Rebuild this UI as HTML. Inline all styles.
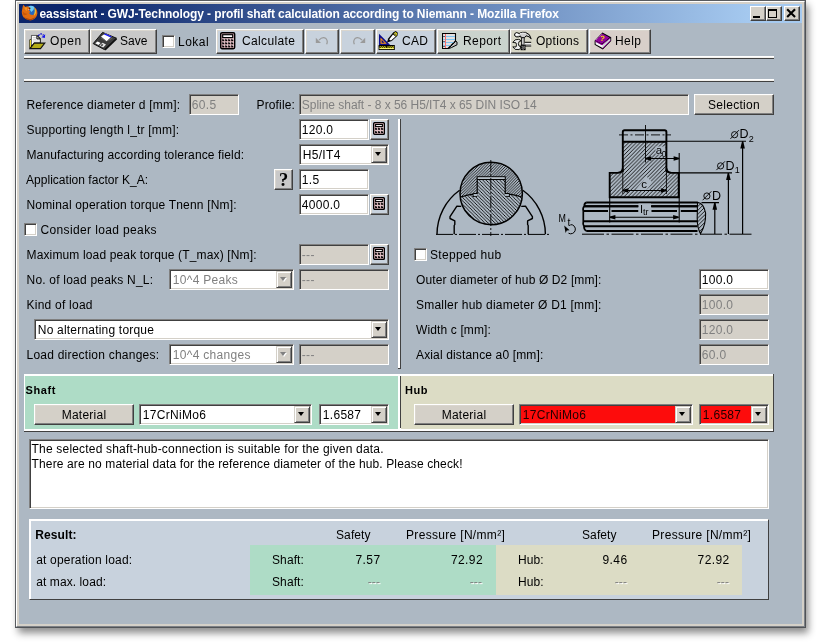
<!DOCTYPE html>
<html><head><meta charset="utf-8"><title>eassistant</title>
<style>
html,body{margin:0;padding:0;background:#fff;}
body{width:821px;height:643px;overflow:hidden;position:relative;will-change:transform;font-family:"Liberation Sans",sans-serif;font-size:12px;color:#000;}
div,span{box-sizing:border-box;}
.abs,.t,.btn,.inp,.sel,.cb,.tb{position:absolute;}
.t{white-space:nowrap;line-height:14px;height:14px;letter-spacing:0.1px;}
.g{color:#808080;}
.win{position:absolute;left:15px;top:0;width:791px;height:628px;background:#d4d0c8;box-shadow:2.5px 5px 7.5px 0 rgba(0,0,0,0.46);}
.content{position:absolute;left:19px;top:23px;width:783px;height:601px;background:#adb8c3;}
.title{position:absolute;left:19px;top:4px;width:783px;height:19px;background:linear-gradient(to right,#0a246a 0%,#0a246a 6%,#a6caf0 94%,#a6caf0 100%);}
.title .tt{position:absolute;left:20.5px;top:3.4px;color:#fff;font-weight:bold;font-size:12px;line-height:15px;white-space:nowrap;letter-spacing:-0.105px;}
.wb{position:absolute;top:2px;width:16px;height:15px;background:#d4d0c8;border:1px solid;border-color:#fff #404040 #404040 #fff;box-shadow:inset -1px -1px 0 #808080;}
.btn{background:#d4d0c8;border:1px solid;border-color:#fff #404040 #404040 #fff;box-shadow:inset -1px -1px 0 #808080,inset 1px 1px 0 #dad6ce;text-align:center;white-space:nowrap;}
.tb{top:29px;height:25px;}
.tb .x{position:absolute;top:4px;line-height:14px;font-size:12px;letter-spacing:0.15px;}
.inp{height:21px;background:#fff;border:1px solid;border-color:#808080 #fff #fff #808080;box-shadow:inset 1px 1px 0 #404040,inset -1px -1px 0 #d4d0c8;padding:3px 0 0 1.8px;line-height:14px;white-space:nowrap;overflow:hidden;letter-spacing:0.3px;}
.dis{background:#d4d0c8;color:#808080;}
.inp.s{padding-left:2.8px;}
.arr{position:absolute;right:1px;top:1px;width:16px;height:17px;background:#d4d0c8;border:1px solid;border-color:#d4d0c8 #404040 #404040 #d4d0c8;box-shadow:inset 1px 1px 0 #fff,inset -1px -1px 0 #808080;}
.arr i{position:absolute;left:2.6px;top:4.8px;width:0;height:0;border-left:3.9px solid transparent;border-right:3.9px solid transparent;border-top:4.3px solid #000;}
.arr.d i{border-top-color:#808080;}
.arr.d i{filter:drop-shadow(1px 1px 0 #fff);}
.cb{width:13px;height:13px;background:#fff;border:1px solid;border-color:#808080 #fff #fff #808080;box-shadow:inset 1px 1px 0 #404040,inset -1px -1px 0 #d4d0c8;}
.hr{position:absolute;left:24px;width:750px;height:3px;background:#f4f2ee;border-top:1px solid #fff;border-bottom:1px solid #404040;}
</style></head><body>

<div class="win">
<div class="abs" style="left:0;top:0;width:791px;height:628px;border:1px solid;border-color:#585b5f #505357 #505357 #585b5f;"></div>
<div class="abs" style="left:1px;top:1px;width:789px;height:626px;border:1px solid;border-color:#fff #7c8086 #7c8086 #fff;"></div>
</div>
<div class="title">
<svg class="abs" style="left:1.6px;top:0.4px" width="17" height="17" viewBox="0 0 16 16.4">
<circle cx="9" cy="7.6" r="5.8" fill="#2468c0"/>
<path d="M7 2.2 Q10 0.8 12.8 3 Q12.4 6 9.8 7.6 Q7.4 5.6 7 2.2Z" fill="#6cccf6"/>
<path d="M2 0.8 L4.2 2.8 Q5.4 1.9 6.6 2.3 L8.1 3.3 L8.9 5 L7.3 6 L8.9 7.7 L7.5 8.7 Q8.7 10.9 11.1 10.7 Q13.5 9.7 13.7 6.4 Q13.5 4.4 12.5 2.8 Q15.8 5 15.6 9.2 Q14.9 13.8 10.5 15.4 Q5.3 16.4 2.2 12.8 Q-0.1 9.5 0.9 5.4 Q1.2 3 2 0.8 Z" fill="#e06c10"/>
<path d="M12.7 3.2 Q14.7 5.6 14.1 8.8 Q13.5 10.6 12.4 11.3 Q13.8 7 12.7 3.2Z" fill="#f6d030"/>
<path d="M2.2 11.8 Q5.4 15.4 10.2 14.3 Q12.6 13.5 13.9 11.6 Q12.8 14.8 9.5 15.6 Q4.9 16.2 2.2 11.8Z" fill="#a84408"/>
<path d="M2.8 3.4 Q4.6 2.8 6 3.7 Q5 5.4 5.6 6.9 Q3.9 6.4 2.8 3.4Z" fill="#f4941c"/>
<path d="M1.4 7 Q3 9.6 6.4 9.4 Q4.4 11.4 2.2 10.6 Q1.2 9 1.4 7Z" fill="#c85808"/>
<circle cx="8.2" cy="4.1" r="0.75" fill="#4a1404"/>
<circle cx="6.9" cy="5.4" r="0.6" fill="#f8a0a0"/>
</svg>
<div class="tt">eassistant - GWJ-Technology - profil shaft calculation according to Niemann - Mozilla Firefox</div>
<div class="wb" style="left:731px"><div class="abs" style="left:2px;top:9px;width:7px;height:2px;background:#000"></div></div>
<div class="wb" style="left:747px"><div class="abs" style="left:1px;top:2px;width:9px;height:9px;border:1px solid #000;border-top-width:2px"></div></div>
<div class="wb" style="left:765px"><svg class="abs" style="left:1px;top:1px" width="12" height="11" viewBox="0 0 12 11"><path d="M1.9 1.9 L8.3 8.3 M8.3 1.9 L1.9 8.3" stroke="#000" stroke-width="2.1" stroke-linecap="square"/></svg></div>
</div>
<div class="content"></div>
<div class="btn tb" style="left:24px;width:66px;background:#c9c9c9">
<span class="x" style="left:25px;letter-spacing:0.6px">Open</span>
</div>
<div class="btn tb" style="left:90px;width:67px;background:#c9c9c9">
<span class="x" style="left:29px;letter-spacing:0.05px">Save</span>
</div>
<div class="btn tb" style="left:216px;width:88px;background:#c8d2dd">
<span class="x" style="left:25px;letter-spacing:0.35px">Calculate</span>
</div>
<div class="btn tb" style="left:305px;width:34px;background:#c8d2dd">
</div>
<div class="btn tb" style="left:340px;width:35px;background:#c8d2dd">
</div>
<div class="btn tb" style="left:376px;width:60px;background:#c8d2dd">
<span class="x" style="left:25px;letter-spacing:0.3px">CAD</span>
</div>
<div class="btn tb" style="left:437px;width:73px;background:#cad3cd">
<span class="x" style="left:25px;letter-spacing:0.4px">Report</span>
</div>
<div class="btn tb" style="left:510px;width:78px;background:#d7d6c6">
<span class="x" style="left:25px;letter-spacing:0.28px">Options</span>
</div>
<div class="btn tb" style="left:589px;width:62px;background:#d8cfc9">
<span class="x" style="left:25px;letter-spacing:0.4px">Help</span>
</div>
<svg class="abs" style="left:29px;top:33px" width="17" height="17" viewBox="0 0 17 17">
<path d="M9.2 2.9 Q11.6 -0.6 14.4 2.2" fill="none" stroke="#0808d0" stroke-width="1.3" stroke-dasharray="1.8 0.9"/>
<path d="M16.2 1.2 L15.8 5 L12.4 4.2 Z" fill="#1010f0"/>
<path d="M0.3 6.8 L2 5.8 V2 H8.2 L11.8 5.6 V10 H5.2 L1.4 15 H0.3 Z" fill="#111"/>
<path d="M2.9 2.9 H7.6 V6.2 H10.8 V9.4 H5 L2.9 12.2 Z" fill="#fff"/>
<path d="M2.4 12 V2.4 H8" fill="none" stroke="#808080" stroke-width="0.9"/>
<path d="M8 2.6 L11 5.8 H8 Z" fill="#fff" stroke="#111" stroke-width="0.9"/>
<path d="M3.8 4.6 H7 M3.8 6.3 H7 M3.8 8 H9.8" stroke="#c4c4c4" stroke-width="0.8"/>
<path d="M0.8 7.2 L2 6.5 V13.6 L0.8 15 Z" fill="#e8dc30"/>
<path d="M0.9 15.6 L5.3 10.1 H15.8 L11.5 15.6 Z" fill="#b4ac18" stroke="#111" stroke-width="1.1"/>
</svg><svg class="abs" style="left:92px;top:31px" width="26" height="20" viewBox="0 0 26 20">
<path d="M10.6 1.4 L24.4 7.2 L12.4 18.6 L1.2 12.6 Z" fill="#3c3c3c" stroke="#111" stroke-width="1"/>
<path d="M9 5.6 L13.2 2.6 L19.6 5.6 L14.6 10.2 Z" fill="#fff"/>
<path d="M11.6 3.3 L13.4 2.4 L19.8 5.4 L18.6 6.6 Z" fill="#1818f0"/>
<path d="M3.2 12.2 L5.6 10.4 L8.6 12 L6.4 14 Z" fill="#fff"/>
<path d="M7.4 14.6 L10.6 11.8 L14 13.6 L11.2 16.6 Z" fill="#e8e8e8"/>
<path d="M8.6 14.2 L10 13 L11.4 13.8 L10 15.2 Z" fill="#3c3c3c"/>
<path d="M24.6 7.6 L13 18.8" stroke="#111" stroke-width="1.6"/>
<path d="M9 7 L13 9 M16 9.4 L20.4 7.2" stroke="#777" stroke-width="0.7"/>
</svg><svg class="abs" style="left:220px;top:32px" width="16" height="18" viewBox="0 0 16 18">
<rect x="0.7" y="0.7" width="14" height="16" rx="1.4" fill="#dcb2b8" stroke="#000" stroke-width="1.4"/>
<rect x="2.7" y="2.7" width="10" height="2.9" fill="#fff" stroke="#000" stroke-width="1.2"/>
<rect x="2.1999999999999997" y="7.2" width="2" height="2" fill="#000"/><rect x="3.5" y="6.6" width="1.1" height="1.1" fill="#fbf0f2"/><rect x="5.199999999999999" y="7.2" width="2" height="2" fill="#000"/><rect x="6.5" y="6.6" width="1.1" height="1.1" fill="#fbf0f2"/><rect x="8.200000000000001" y="7.2" width="2" height="2" fill="#000"/><rect x="9.5" y="6.6" width="1.1" height="1.1" fill="#fbf0f2"/><rect x="11.200000000000001" y="7.2" width="2" height="2" fill="#000"/><rect x="12.5" y="6.6" width="1.1" height="1.1" fill="#fbf0f2"/><rect x="2.1999999999999997" y="10.299999999999999" width="2" height="2" fill="#000"/><rect x="3.5" y="9.7" width="1.1" height="1.1" fill="#fbf0f2"/><rect x="5.199999999999999" y="10.299999999999999" width="2" height="2" fill="#000"/><rect x="6.5" y="9.7" width="1.1" height="1.1" fill="#fbf0f2"/><rect x="8.200000000000001" y="10.299999999999999" width="2" height="2" fill="#000"/><rect x="9.5" y="9.7" width="1.1" height="1.1" fill="#fbf0f2"/><rect x="11.200000000000001" y="10.299999999999999" width="2" height="2" fill="#000"/><rect x="12.5" y="9.7" width="1.1" height="1.1" fill="#fbf0f2"/><rect x="2.1999999999999997" y="13.399999999999999" width="2" height="2" fill="#000"/><rect x="3.5" y="12.799999999999999" width="1.1" height="1.1" fill="#fbf0f2"/><rect x="5.199999999999999" y="13.399999999999999" width="2" height="2" fill="#000"/><rect x="6.5" y="12.799999999999999" width="1.1" height="1.1" fill="#fbf0f2"/><rect x="8.200000000000001" y="13.399999999999999" width="2" height="2" fill="#000"/><rect x="9.5" y="12.799999999999999" width="1.1" height="1.1" fill="#fbf0f2"/><rect x="11.200000000000001" y="13.399999999999999" width="2" height="2" fill="#000"/><rect x="12.5" y="12.799999999999999" width="1.1" height="1.1" fill="#fbf0f2"/></svg><svg class="abs" style="left:315px;top:36px" width="14" height="9" viewBox="0 0 14 9"><path d="M0.8 1.8 V7 H6 Z" fill="#9a9a9a"/><path d="M4 4.2 Q7.5 0.2 11 2.6 Q13.2 5 11.6 8.2" fill="none" stroke="#9a9a9a" stroke-width="1.2"/></svg><svg class="abs" style="left:352px;top:36px" width="14" height="9" viewBox="0 0 14 9"><path d="M13.2 1.8 V7 H8 Z" fill="#9a9a9a"/><path d="M10 4.2 Q6.5 0.2 3 2.6 Q0.8 5 2.4 8.2" fill="none" stroke="#9a9a9a" stroke-width="1.2"/></svg><svg class="abs" style="left:378px;top:31px" width="20" height="20" viewBox="0 0 20 20">
<path d="M1 2.8 V14 H12.2 Z" fill="#0a0a8c"/>
<path d="M2.5 6.4 V12.7 H8.8 Z" fill="#ff9a10"/>
<path d="M3.6 8.8 V11.8 H6.6 Z" fill="#0a0a8c"/>
<path d="M9 11.4 L10.2 7.4 L15.4 1.2 L17.8 0 L19.8 1.8 L19.4 4.8 L13.8 10 Z" fill="#000"/>
<path d="M11.2 8.4 L15 3.6 L17.6 5.6 L13 9.4 Z" fill="#fff"/>
<path d="M15.6 2.6 L17.6 1 L19 2.2 L18.6 4.4 L17.8 5 Z" fill="#f4ec10"/>
<path d="M16.6 2.4 L18 3.6" stroke="#1818b0" stroke-width="0.9"/>
<rect x="0.6" y="14" width="16.2" height="5" fill="#000"/>
<rect x="1.5" y="15.3" width="14.4" height="2.8" fill="#f8f020"/>
<path d="M1.2 15.4 L2.30 16.9 L3.40 15.4 L4.50 16.9 L5.60 15.4 L6.70 16.9 L7.80 15.4 L8.90 16.9 L10.00 15.4 L11.10 16.9 L12.20 15.4 L13.30 16.9 L14.40 15.4 L15.50 16.9" fill="none" stroke="#000" stroke-width="0.7"/>
<path d="M1.6 17.6 H16" stroke="#fff" stroke-width="0.8" stroke-dasharray="1 1"/>
<path d="M8.6 14.6 V16.6" stroke="#000" stroke-width="1"/>
</svg><svg class="abs" style="left:442px;top:33px" width="17" height="17" viewBox="0 0 17 17">
<path d="M0.5 0.5 H13.5 V8 L6 15.5 H0.5 Z" fill="#e2e0e0" stroke="#000" stroke-width="1.1"/>
<path d="M1.2 3.5 H13 M1.2 6.5 H13 M1.2 9.5 H11.4 M1.2 12.5 H8.4" stroke="#7cc4f0" stroke-width="1"/>
<path d="M3.5 1 V15" stroke="#f87070" stroke-width="1"/>
<path d="M2 3 V4 M2 8 V9 M2 13 V14" stroke="#000" stroke-width="1"/>
<path d="M6.4 15.6 L13.8 8.2 L15 9 V11.8 L9.4 14.6 Z" fill="#c0c0c0" stroke="#000" stroke-width="1"/>
</svg><svg class="abs" style="left:512px;top:31px" width="20" height="20" viewBox="0 0 20 20">
<path d="M2.6 4.6 Q2 2.2 4.4 1.6 L7.2 2.4 Q10 0.8 13.6 1.4 Q18.2 2.8 19.2 7.8 Q17.4 5.2 14 4.8 L12.4 6.8 H9.2 L8.6 5 Q6.2 6.4 4.2 5.8 Z" fill="#cfcfcf" stroke="#000" stroke-width="1"/>
<path d="M3.4 3.2 Q4 2.2 5.2 2.6 L7.2 3.4 Q6.2 5 4.2 4.8 Z" fill="#fff"/>
<path d="M8 2.6 Q11 1.6 13.6 2.4" fill="none" stroke="#f4f4f4" stroke-width="0.9"/>
<path d="M9.6 6.8 H12.2 V14 H9.6 Z" fill="#fafafa" stroke="#000" stroke-width="0.9"/>
<path d="M11.2 7.2 V14" stroke="#8c8c8c" stroke-width="0.9"/>
<path d="M12.6 11.6 H19 V14.6 H12.6 Z" fill="#f0f0f0"/>
<path d="M12.6 13.6 H19" stroke="#9c9c9c" stroke-width="1"/>
<path d="M12.6 11.3 H19.2 M12.6 15 H19.2" stroke="#000" stroke-width="1"/>
<path d="M0.8 11.4 L3.2 8.8 L6.6 8.4 Q8.6 8.6 9 10 L7.2 10.4 Q5.6 12.6 7 15 L9 15.6 Q8.8 17.8 7 18.6 L3.2 18.4 L0.8 15.8 L4 16 Q5 13.6 4 11.8 Z" fill="#ececec" stroke="#000" stroke-width="0.9"/>
<path d="M8.6 13.8 H13.6 V19.2 H8.6 Z" fill="#000"/>
<path d="M9.6 14.8 h1 v1 h-1 z M11.6 14.8 h1 v1 h-1 z M10.6 15.8 h1 v1 h-1 z M12.6 15.8 h0.8 v1 h-0.8 z M9.6 16.8 h1 v1 h-1 z M11.6 16.8 h1 v1 h-1 z M10.6 17.8 h1 v1 h-1 z" fill="#bdbdbd"/>
</svg><svg class="abs" style="left:594px;top:32px" width="18" height="18" viewBox="0 0 18 18">
<path d="M0.6 8.8 L8.4 0.6 L17.2 5.2 V9 L8.8 17.4 L0.6 12.8 Z" fill="#000"/>
<path d="M1.6 9.4 L8 12.8 L16.2 6.2 V8.6 L8.6 16 L1.6 12.2 Z" fill="#f6f6f6"/>
<path d="M8.3 13 L16.2 6.6 V8.6 L8.6 16 Z" fill="#ccd6d0"/>
<path d="M1.2 8.6 L8.2 1.4 L15.6 5.4 L8 11.8 Z" fill="#92049a"/>
<path d="M1.8 8 L8 1.8" stroke="#dcb0e0" stroke-width="0.9" stroke-dasharray="1 1"/>
<path d="M1.2 9.2 L8 12.8 L16.2 6" fill="none" stroke="#92049a" stroke-width="1"/>
<path d="M8.6 16.4 L16.6 8.6" stroke="#92049a" stroke-width="1"/>
<text x="6.3" y="9" font-family="Liberation Sans,sans-serif" font-weight="bold" font-size="7.5" fill="#f8e808" transform="rotate(10 9 6)">?</text>
</svg>
<div class="cb" style="left:162px;top:35px"></div>
<div class="t" style="left:178px;top:35px;letter-spacing:0.5px">Lokal</div>
<div class="hr" style="top:56px"></div>
<div class="hr" style="top:79px"></div>
<div class="t" style="left:26.5px;top:98px;letter-spacing:0.191px;">Reference diameter d [mm]:</div>
<div class="inp dis" style="left:189px;top:94px;width:50px">60.5</div>
<div class="t" style="left:256.5px;top:98px;letter-spacing:0.150px;">Profile:</div>
<div class="inp dis" style="left:299px;top:94px;width:390px;letter-spacing:-0.03px">Spline shaft - 8 x 56 H5/IT4 x 65 DIN ISO 14</div>
<div class="btn" style="left:694px;top:94px;width:80px;height:21px;line-height:20px;letter-spacing:0.3px">Selection</div>
<div class="t" style="left:26.5px;top:123px;letter-spacing:0.189px;">Supporting length l_tr [mm]:</div>
<div class="inp" style="left:299px;top:119px;width:70px">120.0</div>
<div class="btn calc" style="left:370px;top:119px;width:19px;height:21px;background:#c8d2dd"></div>
<div class="t" style="left:26.5px;top:148px;letter-spacing:0.121px;">Manufacturing according tolerance field:</div>
<div class="inp s" style="left:299px;top:144px;width:90px">H5/IT4<div class="arr"><i></i></div></div>
<div class="t" style="left:26px;top:173px;letter-spacing:0.027px;">Application factor K_A:</div>
<div class="btn" style="left:274px;top:169px;width:19px;background:#c9c9c9;height:21px;font:bold 18.5px 'Liberation Serif',serif;line-height:21px">?</div>
<div class="inp" style="left:299px;top:169px;width:70px">1.5</div>
<div class="t" style="left:26.5px;top:198px;letter-spacing:0.175px;">Nominal operation torque Tnenn [Nm]:</div>
<div class="inp" style="left:299px;top:194px;width:70px">4000.0</div>
<div class="btn calc" style="left:370px;top:194px;width:19px;height:21px;background:#c8d2dd"></div>
<div class="cb" style="left:24px;top:223px"></div>
<div class="t" style="left:40.5px;top:223px;letter-spacing:0.367px;">Consider load peaks</div>
<div class="t" style="left:26.5px;top:248px;letter-spacing:0.142px;">Maximum load peak torque (T_max) [Nm]:</div>
<div class="inp dis" style="left:299px;top:244px;width:70px">---</div>
<div class="btn calc" style="left:370px;top:244px;width:19px;height:21px;background:#c8d2dd"></div>
<div class="t" style="left:26.5px;top:273px;letter-spacing:0.211px;">No. of load peaks N_L:</div>
<div class="inp dis s" style="left:169px;top:269px;width:125px;background:#fff">10^4 Peaks<div class="arr d"><i></i></div></div>
<div class="inp dis" style="left:299px;top:269px;width:90px">---</div>
<div class="t" style="left:26.5px;top:298px;letter-spacing:0.238px;">Kind of load</div>
<div class="inp s" style="left:34px;top:319px;width:355px;letter-spacing:0.2px">No alternating torque<div class="arr"><i></i></div></div>
<div class="t" style="left:26.5px;top:348px;letter-spacing:0.231px;">Load direction changes:</div>
<div class="inp dis s" style="left:169px;top:344px;width:125px;background:#fff">10^4 changes<div class="arr d"><i></i></div></div>
<div class="inp dis" style="left:299px;top:344px;width:90px">---</div>
<svg class="abs" style="left:373px;top:122px" width="12" height="13" viewBox="0 0 12 13">
<rect x="0.6" y="0.6" width="10.8" height="11.8" rx="1.3" fill="#dfb9be" stroke="#000" stroke-width="1.3"/>
<rect x="2.6" y="2.5" width="6.8" height="2.1" fill="#fff" stroke="#000" stroke-width="1.1"/>
<rect x="2.1" y="5.8" width="2" height="2" fill="#000"/><rect x="3.4000000000000004" y="5.300000000000001" width="1" height="1" fill="#fbf0f2"/><rect x="5.1" y="5.8" width="2" height="2" fill="#000"/><rect x="6.4" y="5.300000000000001" width="1" height="1" fill="#fbf0f2"/><rect x="8.1" y="5.8" width="2" height="2" fill="#000"/><rect x="9.399999999999999" y="5.300000000000001" width="1" height="1" fill="#fbf0f2"/><rect x="2.1" y="9.1" width="2" height="2" fill="#000"/><rect x="3.4000000000000004" y="8.6" width="1" height="1" fill="#fbf0f2"/><rect x="5.1" y="9.1" width="2" height="2" fill="#000"/><rect x="6.4" y="8.6" width="1" height="1" fill="#fbf0f2"/><rect x="8.1" y="9.1" width="2" height="2" fill="#000"/><rect x="9.399999999999999" y="8.6" width="1" height="1" fill="#fbf0f2"/></svg><svg class="abs" style="left:373px;top:197px" width="12" height="13" viewBox="0 0 12 13">
<rect x="0.6" y="0.6" width="10.8" height="11.8" rx="1.3" fill="#dfb9be" stroke="#000" stroke-width="1.3"/>
<rect x="2.6" y="2.5" width="6.8" height="2.1" fill="#fff" stroke="#000" stroke-width="1.1"/>
<rect x="2.1" y="5.8" width="2" height="2" fill="#000"/><rect x="3.4000000000000004" y="5.300000000000001" width="1" height="1" fill="#fbf0f2"/><rect x="5.1" y="5.8" width="2" height="2" fill="#000"/><rect x="6.4" y="5.300000000000001" width="1" height="1" fill="#fbf0f2"/><rect x="8.1" y="5.8" width="2" height="2" fill="#000"/><rect x="9.399999999999999" y="5.300000000000001" width="1" height="1" fill="#fbf0f2"/><rect x="2.1" y="9.1" width="2" height="2" fill="#000"/><rect x="3.4000000000000004" y="8.6" width="1" height="1" fill="#fbf0f2"/><rect x="5.1" y="9.1" width="2" height="2" fill="#000"/><rect x="6.4" y="8.6" width="1" height="1" fill="#fbf0f2"/><rect x="8.1" y="9.1" width="2" height="2" fill="#000"/><rect x="9.399999999999999" y="8.6" width="1" height="1" fill="#fbf0f2"/></svg><svg class="abs" style="left:373px;top:247px" width="12" height="13" viewBox="0 0 12 13">
<rect x="0.6" y="0.6" width="10.8" height="11.8" rx="1.3" fill="#dfb9be" stroke="#000" stroke-width="1.3"/>
<rect x="2.6" y="2.5" width="6.8" height="2.1" fill="#fff" stroke="#000" stroke-width="1.1"/>
<rect x="2.1" y="5.8" width="2" height="2" fill="#000"/><rect x="3.4000000000000004" y="5.300000000000001" width="1" height="1" fill="#fbf0f2"/><rect x="5.1" y="5.8" width="2" height="2" fill="#000"/><rect x="6.4" y="5.300000000000001" width="1" height="1" fill="#fbf0f2"/><rect x="8.1" y="5.8" width="2" height="2" fill="#000"/><rect x="9.399999999999999" y="5.300000000000001" width="1" height="1" fill="#fbf0f2"/><rect x="2.1" y="9.1" width="2" height="2" fill="#000"/><rect x="3.4000000000000004" y="8.6" width="1" height="1" fill="#fbf0f2"/><rect x="5.1" y="9.1" width="2" height="2" fill="#000"/><rect x="6.4" y="8.6" width="1" height="1" fill="#fbf0f2"/><rect x="8.1" y="9.1" width="2" height="2" fill="#000"/><rect x="9.399999999999999" y="8.6" width="1" height="1" fill="#fbf0f2"/></svg>
<div class="abs" style="left:398px;top:119px;width:3px;height:250px;background:#fff;border-right:1px solid #404040;border-bottom:1px solid #404040"></div>
<div class="cb" style="left:414px;top:248px"></div>
<div class="t" style="left:430px;top:248px;letter-spacing:0.304px;">Stepped hub</div>
<div class="t" style="left:416px;top:273px;letter-spacing:0.129px;">Outer diameter of hub &Oslash; D2 [mm]:</div>
<div class="inp" style="left:699px;top:269px;width:70px">100.0</div>
<div class="t" style="left:416px;top:298px;letter-spacing:0.222px;">Smaller hub diameter &Oslash; D1 [mm]:</div>
<div class="inp dis" style="left:699px;top:294px;width:70px">100.0</div>
<div class="t" style="left:416px;top:323px;letter-spacing:0.130px;">Width c [mm]:</div>
<div class="inp dis" style="left:699px;top:319px;width:70px">120.0</div>
<div class="t" style="left:416px;top:348px;letter-spacing:0.148px;">Axial distance a0 [mm]:</div>
<div class="inp dis" style="left:699px;top:344px;width:70px">60.0</div>
<svg class="abs" style="left:430px;top:118px" width="340" height="128" viewBox="430 118 340 128" shape-rendering="auto">
<defs>
<pattern id="h1" width="3.8" height="3.8" patternUnits="userSpaceOnUse"><path d="M-1 4.8 L4.8 -1 M-1 1 L1 -1 M2.8 4.8 L4.8 2.8" stroke="#000" stroke-width="0.85"/></pattern>
<pattern id="h2" width="2.8" height="2.8" patternUnits="userSpaceOnUse"><path d="M-1 3.8 L3.8 -1 M-1 1 L1 -1 M1.8 3.8 L3.8 1.8" stroke="#000" stroke-width="0.8"/></pattern>
<pattern id="h3" width="3.4" height="3.4" patternUnits="userSpaceOnUse"><path d="M-1 -1 L4.4 4.4 M-1 2.4 L1 4.4 M2.4 -1 L4.4 1" stroke="#000" stroke-width="0.85"/></pattern>
<clipPath id="cc"><circle cx="490.5" cy="193.5" r="31"/></clipPath>
</defs>
<clipPath id="cc2"><circle cx="491.2" cy="193.5" r="31.2"/></clipPath>
<g clip-path="url(#cc2)"><path d="M459.2 160 H523.2 V197 L521.4 197 Q514.7 194.5 509.2 194 L509.2 193.5 H505.2 V177 H477.2 V193.5 H473.2 L473.2 194 Q467.7 194.5 461.0 197 L459.2 197 Z" fill="url(#h2)"/><path d="M459.2 197 L461.0 197 Q467.7 194.5 473.2 194 L473.2 196.5 H477.2 V179 H505.2 V196.5 H509.2 V194 Q514.7 194.5 521.4 197 L523.2 197 V226 H459.2 Z" fill="url(#h3)"/></g>
<circle cx="491.2" cy="193.5" r="31.2" stroke="#000" fill="none" stroke-width="1.5"/>
<path d="M460.8 197 Q467.7 194.6 473.2 194.2 M473.2 193.5 H477.2 V176.8 H505.2 V193.5 H509.2 M509.2 194.2 Q514.7 194.6 521.6 197 M473.2 193.5 V196.5 H477.2 M509.2 193.5 V196.5 H505.2 M477.2 179.3 H505.2" stroke="#000" fill="none" stroke-width="1.2"/>
<rect x="473.7" y="194" width="3" height="2.2" fill="#adb8c3"/><rect x="505.7" y="194" width="3" height="2.2" fill="#adb8c3"/><rect x="477.7" y="177.4" width="27" height="1.4" fill="#c4ccd4"/>
<path d="M437.0 234.3 A54.2 54.2 0 0 1 459.6 190.3 M545.4 234.3 A54.2 54.2 0 0 0 522.8 190.3" stroke="#000" fill="none" stroke-width="1.4"/>
<path d="M521.2 206.4 L525.5 206.2 L532.4 216.6 L532.4 218.5 L527.6 220.9 L527.6 224.5 L528.2 225.5 L528.2 234.3 M461.2 206.4 L456.9 206.2 L450.0 216.6 L450.0 218.5 L454.8 220.9 L454.8 224.5 L454.2 225.5 L454.2 234.3" stroke="#000" fill="none" stroke-width="1.4" stroke-linejoin="round"/>
<path d="M490.8 160 V236" stroke="#000" fill="none" stroke-width="0.9" stroke-dasharray="12 2 2 2"/>
<path d="M436 234.4 H549" stroke="#000" fill="none" stroke-width="1" stroke-dasharray="17 2 2 2"/>
<text x="558.6" y="222.3" font-family="Liberation Sans,sans-serif" font-size="11.5" fill="#000" textLength="7.4" lengthAdjust="spacingAndGlyphs">M</text>
<text x="567.4" y="225.6" font-family="Liberation Sans,sans-serif" font-size="10.5" fill="#000">t</text>
<path d="M570.5 224.6 A4.6 4.6 0 1 1 568.5 233.2" stroke="#000" fill="none" stroke-width="1"/>
<path d="M564.2 225.6 L569.6 230.2 L566.8 230.6 L565.6 233 Z" fill="#000"/>
<path d="M622.8 141.7 H666.4 V168.5 Q667 172.8 671.5 172.9 H678.7 V197.3 H609.7 V172.9 H617.5 Q622.2 172.8 622.8 168.5 Z" fill="url(#h1)"/>
<path d="M655.5 146.5 H665.6 V157 H662 V154.5 H655.5 Z" fill="#adb8c3"/>
<path d="M635.5 190 L646.5 176.5 L652.5 182.5 L646.5 190 Z" fill="#adb8c3"/>
<path d="M622.8 172 V132 Q622.8 130.2 624.6 130.2 H664.6 Q666.4 130.2 666.4 132 V172 M622.8 141.7 H666.4" stroke="#000" fill="none" stroke-width="1.9"/>
<path d="M622.8 168.5 Q622.2 172.8 617.5 172.9 H609.7 V197.3 H678.7 V172.9 H671.5 Q667 172.8 666.4 168.5" stroke="#000" fill="none" stroke-width="1.9"/>
<path d="M622.8 172 V194 M666.4 172 V194" stroke="#000" fill="none" stroke-width="0.9"/>
<path d="M645.5 125 V162.5" stroke="#000" fill="none" stroke-width="0.9"/>
<path d="M619 134.9 H671" stroke="#000" fill="none" stroke-width="0.9" stroke-dasharray="9 2.5 2 2.5"/>
<path d="M666.4 141.3 H746 M679 172.9 H732 M701.5 202.6 H719 M679.2 153 V222.5 M609.7 197.3 V222.5" stroke="#000" fill="none" stroke-width="1.1"/>
<path d="M645.5 158.5 H679.2 M622.8 190.5 H666.4 M609.7 217.3 H678.7" stroke="#000" fill="none" stroke-width="1.1"/>
<path d="M645.8 157.8 L651.1999999999999 156.2 V160.8 L645.8 159.2 Z" fill="#000"/>
<path d="M679 157.8 L673.6 156.2 V160.8 L679 159.2 Z" fill="#000"/>
<path d="M623 189.8 L628.4 188.2 V192.8 L623 191.2 Z" fill="#000"/>
<path d="M666.2 189.8 L660.8000000000001 188.2 V192.8 L666.2 191.2 Z" fill="#000"/>
<path d="M610 216.60000000000002 L615.4 215.0 V219.60000000000002 L610 218.0 Z" fill="#000"/>
<path d="M678.5 216.60000000000002 L673.1 215.0 V219.60000000000002 L678.5 218.0 Z" fill="#000"/>
<text x="655.8" y="153.6" font-size="11.5" font-family="Liberation Sans,sans-serif" fill="#000">a</text><text x="661.7" y="156.5" font-size="9.5" font-family="Liberation Sans,sans-serif" fill="#000" textLength="4.6" lengthAdjust="spacingAndGlyphs">0</text>
<text x="641.3" y="188.2" font-size="11.5" font-family="Liberation Sans,sans-serif" fill="#000">c</text>
<path d="M586.3 202.4 H697.5 M584.5 206.2 H697.5 M583.3 211.1 H608 M611.5 211.1 H638.5 M651.5 211.1 H677 M680.8 211.1 H697.5 M583.3 221.3 H697.5 M584 226.2 H697.5 M586.3 231 H697.5" stroke="#000" fill="none" stroke-width="2"/>
<path d="M586.5 202.4 Q584 203.5 584.3 206.2 Q582.5 208 583.3 211.1 V221.3 Q582.6 224 584 226.2 Q583.8 229.5 586.5 231" stroke="#000" fill="none" stroke-width="1.7"/>
<rect x="638.5" y="203.5" width="12.5" height="12" fill="#adb8c3"/>
<path d="M584.5 206.2 H638 M651.5 206.2 H697" stroke="#000" fill="none" stroke-width="2"/>
<text x="640.2" y="212.6" font-size="11.5" font-family="Liberation Sans,sans-serif" fill="#000">l</text><text x="643" y="215.4" font-size="9" font-family="Liberation Sans,sans-serif" fill="#000">tr</text>
<path d="M697.5 202.4 Q703.5 203 705.6 213 Q706 225 700.5 233.6 Q697.2 228 697.2 218 Z" fill="url(#h1)" stroke="#000" stroke-width="1.1"/>
<path d="M582 234.2 H752" stroke="#000" fill="none" stroke-width="1" stroke-dasharray="22 2.5 2.5 2.5"/>
<path d="M742.6 141.3 V234 M728.4 172.9 V234 M714.8 202.6 V234" stroke="#000" fill="none" stroke-width="1.2"/>
<path d="M742.0 141.5 L740.3000000000001 148.5 H744.9 L743.2 141.5 Z" fill="#000"/>
<path d="M727.8 173.1 L726.1 180.1 H730.6999999999999 L729.0 173.1 Z" fill="#000"/>
<path d="M714.1999999999999 202.8 L712.5 209.8 H717.0999999999999 L715.4 202.8 Z" fill="#000"/>
<circle cx="734.6" cy="134.70000000000002" r="3.1" fill="none" stroke="#000" stroke-width="0.9"/><path d="M730.4 138.9 L739 130.10000000000002" stroke="#000" stroke-width="0.9"/><text x="739.6" y="138.3" font-size="12.5" font-family="Liberation Sans,sans-serif" fill="#000">D</text><text x="748.8" y="141.5" font-size="9" font-family="Liberation Sans,sans-serif" fill="#000">2</text>
<circle cx="720.6" cy="165.9" r="3.1" fill="none" stroke="#000" stroke-width="0.9"/><path d="M716.4 170.1 L725 161.3" stroke="#000" stroke-width="0.9"/><text x="725.6" y="169.5" font-size="12.5" font-family="Liberation Sans,sans-serif" fill="#000">D</text><text x="734.8" y="172.7" font-size="9" font-family="Liberation Sans,sans-serif" fill="#000">1</text>
<circle cx="706.9" cy="196.0" r="3.1" fill="none" stroke="#000" stroke-width="0.9"/><path d="M702.6999999999999 200.2 L711.3 191.4" stroke="#000" stroke-width="0.9"/><text x="711.9" y="199.6" font-size="12.5" font-family="Liberation Sans,sans-serif" fill="#000">D</text>
</svg>
<div class="abs" style="left:24px;top:374px;width:750px;height:58px;background:#fff;border-bottom:1px solid #404040;border-right:1px solid #404040"></div>
<div class="abs" style="left:25px;top:376px;width:373px;height:53px;background:#aedcc6"></div>
<div class="abs" style="left:401px;top:376px;width:372px;height:53px;background:#dcdcc5"></div>
<div class="abs" style="left:400px;top:376px;width:1px;height:52px;background:#404040"></div>
<div class="t" style="left:25.6px;top:383px;font-weight:bold;font-size:11px;letter-spacing:0.55px">Shaft</div>
<div class="t" style="left:405px;top:383px;font-weight:bold;font-size:11px;letter-spacing:0.6px">Hub</div>
<div class="btn" style="left:34px;top:404px;width:100px;height:21px;line-height:20px;letter-spacing:0.25px">Material</div>
<div class="inp s" style="left:139px;top:404px;width:173px">17CrNiMo6<div class="arr"><i></i></div></div>
<div class="inp s" style="left:319px;top:404px;width:70px">1.6587<div class="arr"><i></i></div></div>
<div class="btn" style="left:414px;top:404px;width:100px;height:21px;line-height:20px;letter-spacing:0.25px">Material</div>
<div class="inp s" style="left:519px;top:404px;width:174px;background:#fd0c0c;color:#200000">17CrNiMo6<div class="arr"><i></i></div></div>
<div class="inp s" style="left:699px;top:404px;width:70px;background:#fd0c0c;color:#200000">1.6587<div class="arr"><i></i></div></div>
<div class="inp" style="left:29px;top:439px;width:740px;height:70px;padding:0"></div>
<div class="t" style="left:31.6px;top:442px;letter-spacing:0.183px;">The selected shaft-hub-connection is suitable for the given data.</div>
<div class="t" style="left:31.6px;top:457px;letter-spacing:0.128px;">There are no material data for the reference diameter of the hub. Please check!</div>
<div class="abs" style="left:29px;top:519px;width:740px;height:81px;background:#c8d2dd;border:1px solid;border-color:#fff #404040 #404040 #fff;box-shadow:inset 1px 1px 0 #fff"></div>
<div class="abs" style="left:250px;top:545px;width:246px;height:50px;background:#aedcc6"></div>
<div class="abs" style="left:496px;top:545px;width:246px;height:50px;background:#dcdcc5"></div>
<div class="t" style="left:35.3px;top:528px;font-weight:bold">Result:</div>
<div class="t" style="left:36.2px;top:553px;letter-spacing:0.186px;">at operation load:</div>
<div class="t" style="left:36.2px;top:575px;letter-spacing:0.092px;">at max. load:</div>
<div class="t" style="left:336px;top:528px;">Safety</div>
<div class="t" style="left:406px;top:528px;letter-spacing:0.319px;">Pressure [N/mm&sup2;]</div>
<div class="t" style="left:582px;top:528px;">Safety</div>
<div class="t" style="left:652px;top:528px;letter-spacing:0.319px;">Pressure [N/mm&sup2;]</div>
<div class="t" style="left:272px;top:553px;">Shaft:</div>
<div class="t" style="left:272px;top:575px;">Shaft:</div>
<div class="t" style="left:518px;top:553px;">Hub:</div>
<div class="t" style="left:518px;top:575px;">Hub:</div>
<div class="t" style="right:440.5px;top:553px;letter-spacing:0.4px">7.57</div>
<div class="t" style="right:338px;top:553px;letter-spacing:0.4px">72.92</div>
<div class="t" style="right:193.5px;top:553px;letter-spacing:0.4px">9.46</div>
<div class="t" style="right:91.39999999999998px;top:553px;letter-spacing:0.4px">72.92</div>
<div class="t" style="right:441px;top:575px;color:#808080;text-shadow:1px 1px 0 #fff">---</div>
<div class="t" style="right:339px;top:575px;color:#808080;text-shadow:1px 1px 0 #fff">---</div>
<div class="t" style="right:194px;top:575px;color:#808080;text-shadow:1px 1px 0 #fff">---</div>
<div class="t" style="right:92px;top:575px;color:#808080;text-shadow:1px 1px 0 #fff">---</div>
</body></html>
